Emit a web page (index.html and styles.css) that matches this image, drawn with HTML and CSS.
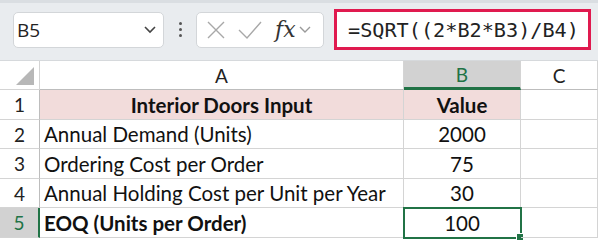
FILE: index.html
```html
<!DOCTYPE html>
<html lang="en">
<head>
  <meta charset="UTF-8">
  <title>EOQ Sheet</title>
  <link rel="stylesheet" href="styles.css">
</head>
<body>
  <div class="toolbar">
    <div class="namebox">
      <span>B5</span>
      <svg width="14" height="10" viewBox="0 0 14 10"><path d="M2 2 L7 7 L12 2" fill="none" stroke="#444" stroke-width="1.6"/></svg>
    </div>
    <div class="dots"><i></i><i></i><i></i></div>
    <div class="fxbox">
      <svg width="20" height="20" viewBox="0 0 20 20"><path d="M2 2 L18 18 M18 2 L2 18" stroke="#a8a8a8" stroke-width="1.4"/></svg>
      <svg width="24" height="20" viewBox="0 0 24 20"><path d="M1 10 L9 18 L23 2" fill="none" stroke="#a8a8a8" stroke-width="1.4"/></svg>
      <span class="fx">fx</span>
      <svg width="12" height="8" viewBox="0 0 12 8"><path d="M1 1 L6 6 L11 1" fill="none" stroke="#9a9a9a" stroke-width="1.4"/></svg>
    </div>
    <div class="formula">=SQRT((2*B2*B3)/B4)</div>
  </div>

  <div class="sheet">
    <div class="corner"><i></i></div>
    <div class="colhead">A</div>
    <div class="colhead active">B</div>
    <div class="colhead">C</div>

    <div class="rowhead">1</div>
    <div class="cell title bold center">Interior Doors Input</div>
    <div class="cell title bold center">Value</div>
    <div class="cell"></div>

    <div class="rowhead">2</div>
    <div class="cell">Annual Demand (Units)</div>
    <div class="cell center">2000</div>
    <div class="cell"></div>

    <div class="rowhead">3</div>
    <div class="cell">Ordering Cost per Order</div>
    <div class="cell center">75</div>
    <div class="cell"></div>

    <div class="rowhead">4</div>
    <div class="cell">Annual Holding Cost per Unit per Year</div>
    <div class="cell center">30</div>
    <div class="cell"></div>

    <div class="rowhead active">5</div>
    <div class="cell bold">EOQ (Units per Order)</div>
    <div class="cell center selected">100<i class="handle"></i></div>
    <div class="cell"></div>
  </div>
</body>
</html>
```

FILE: styles.css
```css
body {
  margin: 0;
  width: 598px;
  height: 240px;
  overflow: hidden;
  background: #fff;
  font-family: "Lato", "Liberation Sans", sans-serif;
}

.toolbar {
  height: 57px;
  border-top: 3px solid #dadee2;
  background: #e9ecef;
  display: flex;
  align-items: center;
  padding-left: 13px;
  box-sizing: content-box;
  border-bottom: 1px solid #d6d9dc;
}

.namebox {
  width: 151px;
  height: 36px;
  box-sizing: border-box;
  background: #fff;
  border: 1px solid #d3d6d9;
  border-radius: 5px;
  display: flex;
  align-items: center;
  justify-content: space-between;
  padding: 0 6px 0 3px;
  margin-top: -4px;
  font-family: "Open Sans", sans-serif;
  font-size: 19px;
  color: #222;
}

.dots {
  width: 32px;
  display: flex;
  flex-direction: column;
  align-items: center;
  gap: 3px;
  margin-top: -4px;
}

.dots i {
  width: 3px;
  height: 3px;
  background: #555;
  border-radius: 50%;
}

.fxbox {
  width: 128px;
  height: 36px;
  box-sizing: border-box;
  background: #fff;
  border: 1px solid #d3d6d9;
  border-radius: 5px;
  display: flex;
  align-items: center;
  padding-left: 9px;
  gap: 12px;
  margin-top: -4px;
}

.fxbox .fx {
  font-family: "DejaVu Serif", serif;
  font-style: italic;
  font-size: 22px;
  color: #333;
  margin-left: 1px;
  margin-right: -9px;
}

.formula {
  margin-left: 10px;
  width: 257px;
  height: 41px;
  box-sizing: border-box;
  background: #fff;
  border: 3px solid #e01a4f;
  margin-top: -4px;
  display: flex;
  align-items: center;
  padding-left: 11px;
  font-family: "DejaVu Sans Mono", monospace;
  font-size: 20.2px;
  color: #222;
}

.sheet {
  display: grid;
  grid-template-columns: 40px 364px 117px 1fr;
  grid-template-rows: 29px 30px 29px 30px 29px 30px;
  font-size: 20.5px;
  color: #111;
}

.sheet > div {
  box-sizing: border-box;
  border-right: 1px solid #d4d4d4;
  border-bottom: 1px solid #d4d4d4;
  display: flex;
  align-items: center;
  position: relative;
}

.corner {
  background: #fff;
}

.corner i {
  position: absolute;
  right: 5px;
  bottom: 4px;
  width: 0;
  height: 0;
  border-left: 18px solid transparent;
  border-bottom: 18px solid #b7b7b7;
}

.colhead {
  justify-content: center;
  background: #fff;
  font-size: 19px;
  color: #222;
  border-bottom-color: #bdbdbd !important;
}

.colhead.active {
  background: #d2d2d2;
  color: #217346;
  border-bottom: 3px solid #217346 !important;
}

.rowhead {
  justify-content: center;
  font-size: 19px;
  color: #222;
  border-right-color: #bdbdbd !important;
}

.rowhead.active {
  background: #d2d2d2;
  color: #217346;
  border-right: 2px solid #217346 !important;
}

.cell {
  padding-left: 4px;
}

.center {
  justify-content: center;
  padding-left: 0;
}

.bold {
  font-weight: bold;
}

.title {
  background: #f2dcdb;
}

.selected {
  outline: 2px solid #217346;
  outline-offset: -1px;
}

.handle {
  position: absolute;
  right: -4px;
  bottom: -4px;
  width: 6px;
  height: 6px;
  background: #217346;
  border: 1px solid #fff;
}
```
